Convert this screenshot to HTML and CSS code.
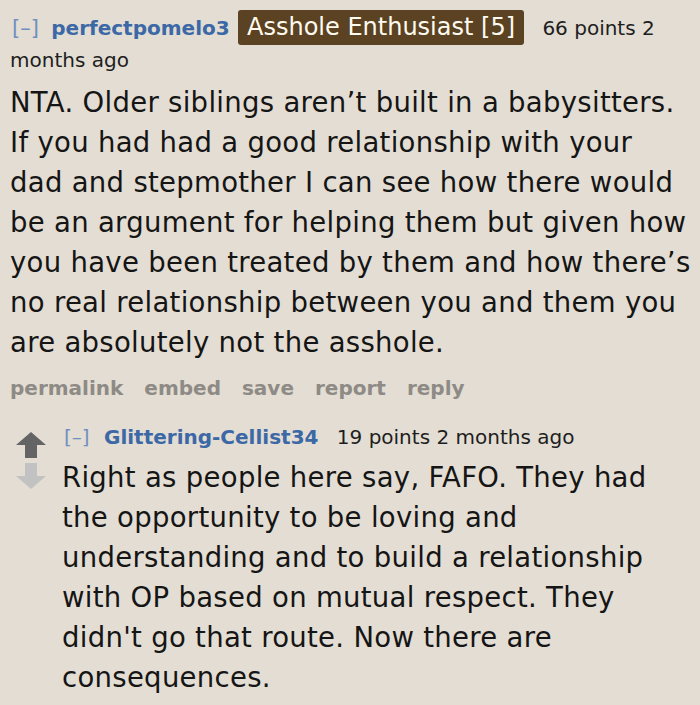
FILE: index.html
```html
<!DOCTYPE html>
<html>
<head>
<meta charset="utf-8">
<link rel="stylesheet" href="styles.css">
</head>
<body>
<div class="page">
  <div class="comment">
    <div class="tagline">
      <span class="toggle">[–]</span> <span class="author">perfectpomelo3</span> <span class="flair">Asshole Enthusiast [5]</span> <span class="score">66 points</span> <span class="time">2 months ago</span>
    </div>
    <div class="body">NTA. Older siblings aren’t built in a babysitters. If you had had a good relationship with your dad and stepmother I can see how there would be an argument for helping them but given how you have been treated by them and how there’s no real relationship between you and them you are absolutely not the asshole.</div>
    <div class="buttons">
      <span>permalink</span><span>embed</span><span>save</span><span>report</span><span>reply</span>
    </div>
  </div>
  <div class="child">
    <div class="arrows">
      <svg class="arrow up" viewBox="0 0 30 26" width="30" height="26"><path d="M15 0 L30 13 L21 13 L21 26 L9 26 L9 13 L0 13 Z"/></svg>
      <svg class="arrow down" viewBox="0 0 30 26" width="30" height="26"><path d="M15 26 L30 13 L21 13 L21 0 L9 0 L9 13 L0 13 Z"/></svg>
    </div>
    <div class="entry">
      <div class="tagline small">
        <span class="toggle">[–]</span> <span class="author">Glittering-Cellist34</span> <span class="score">19 points</span> <span class="time">2 months ago</span>
      </div>
      <div class="body">Right as people here say, FAFO. They had the opportunity to be loving and understanding and to build a relationship with OP based on mutual respect. They didn't go that route. Now there are consequences.</div>
    </div>
  </div>
</div>
</body>
</html>
```

FILE: styles.css
```css
html, body {
  margin: 0;
  padding: 0;
  background: #e3ddd3;
}
body {
  font-family: "DejaVu Sans", Verdana, sans-serif;
  color: #151515;
  width: 700px;
  height: 705px;
  overflow: hidden;
}
.page {
  padding: 10px 0 0 10px;
  width: 681px;
}
.tagline {
  font-size: 20px;
  line-height: 31px;
  color: #1e1e1e;
}
.toggle {
  color: #7090c0;
  font-weight: normal;
  font-size: 21px;
  margin-left: 2px;
  margin-right: 6px;
}
.author {
  color: #3c68a6;
  font-weight: bold;
}
.flair {
  display: inline-block;
  background: #5a4222;
  color: #fffaf0;
  font-size: 24px;
  line-height: 35px;
  padding: 0 9px;
  border-radius: 3px;
  margin: 0 12px 0 2px;
}
.body {
  font-size: 27.5px;
  letter-spacing: 0.3px;
  line-height: 40px;
  color: #151515;
  margin-top: 6px;
}
.buttons {
  margin-top: 14px;
  font-size: 20px;
  font-weight: bold;
  color: #8e8a85;
  display: flex;
  gap: 21px;
}
.child {
  display: flex;
  margin-top: 22px;
}
.arrows {
  display: flex;
  flex-direction: column;
  width: 52px;
  flex: none;
  padding-top: 10px;
  gap: 5px;
}
.arrow {
  width: 30px;
  height: 26px;
  margin-left: 6px;
}
.arrow.up { fill: #646464; }
.arrow.down { fill: #c2c2c2; }
.entry { width: 620px; flex: none; }
.small { font-size: 20px; }
.small .toggle { font-size: 20px; margin-right: 8px; }
.small .score { margin-left: 12px; }
.child .body { margin-top: 4px; }
```
